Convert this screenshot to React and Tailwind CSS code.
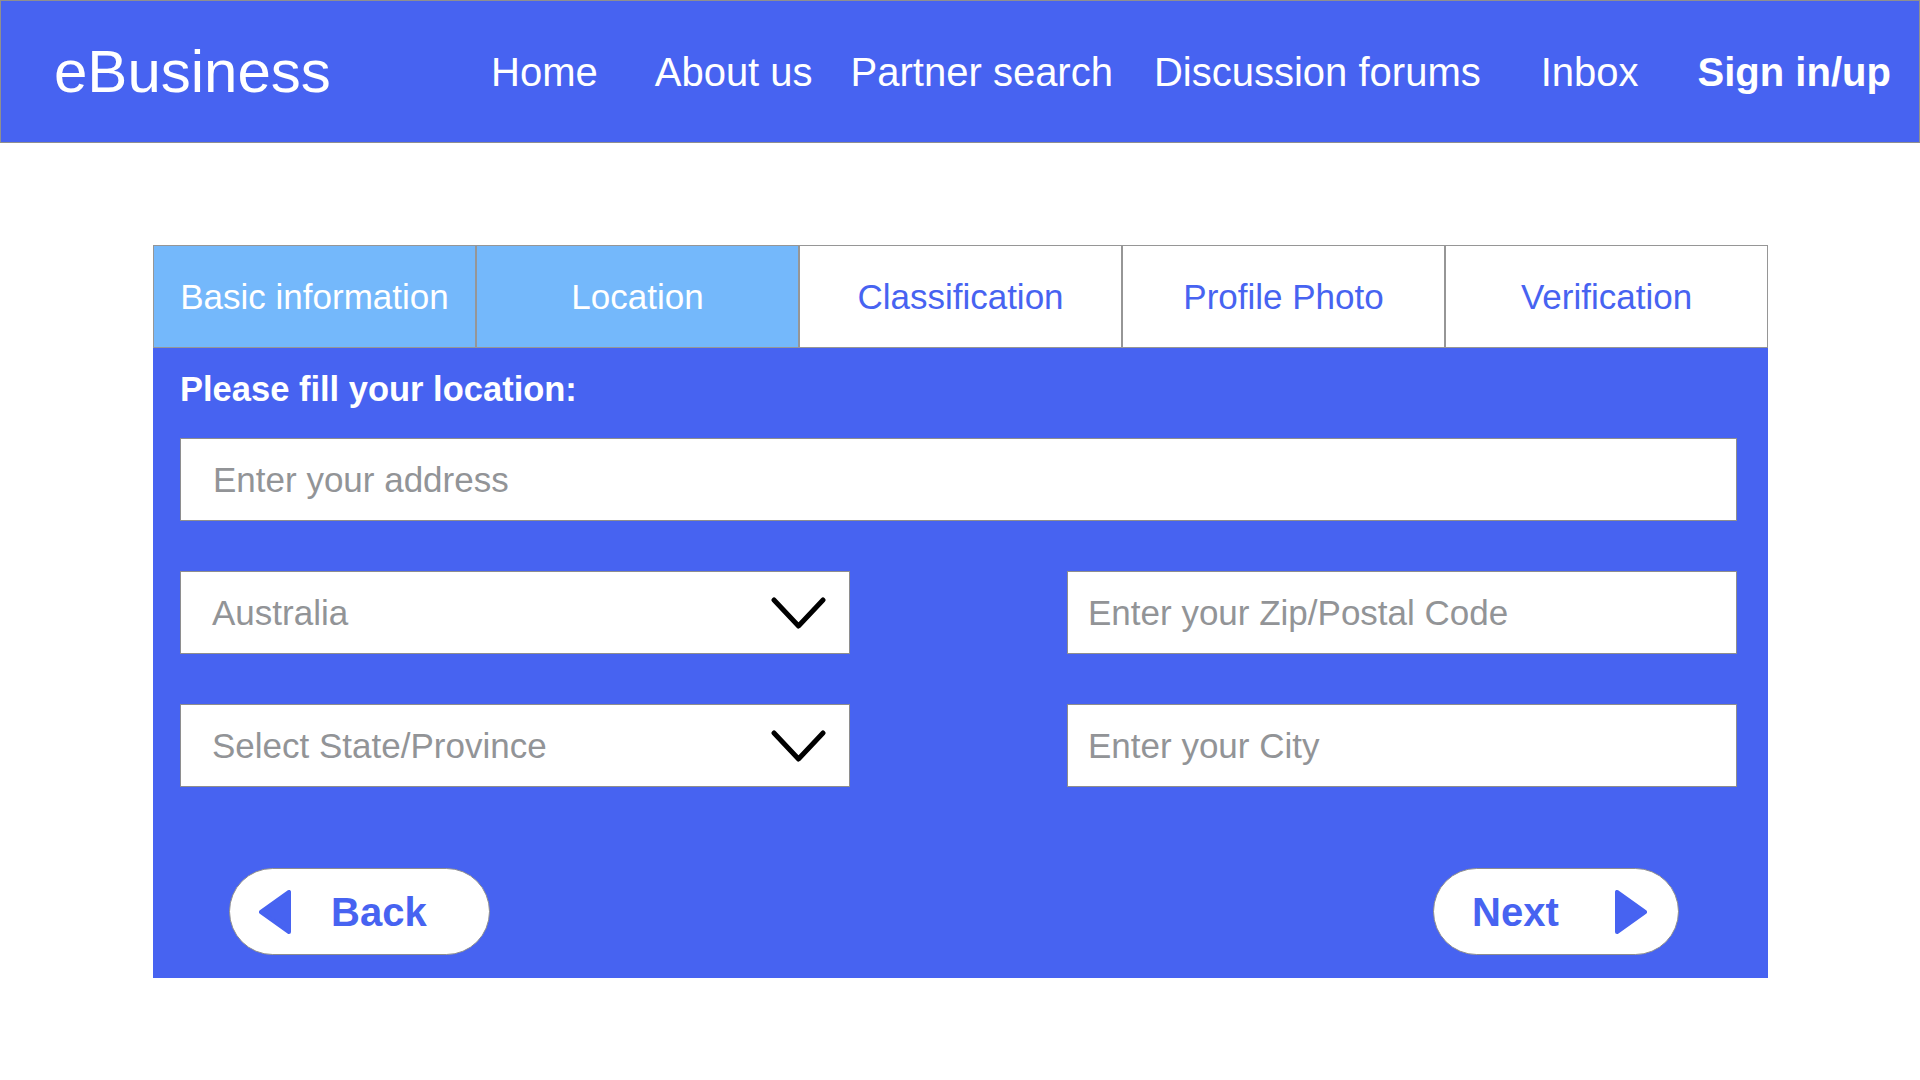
import React from 'react';

const BLUE = 'text-[#4763f1]';

const navItems = [
  { label: 'Home', cls: '' },
  { label: 'About us', cls: 'ml-[57px]' },
  { label: 'Partner search', cls: 'ml-[38px]' },
  { label: 'Discussion forums', cls: 'ml-[41px]' },
  { label: 'Inbox', cls: 'ml-[60px]' },
  { label: 'Sign in/up', cls: 'ml-[59px] font-bold' },
];

const tabs = [
  { label: 'Basic information', active: true },
  { label: 'Location', active: true },
  { label: 'Classification', active: false },
  { label: 'Profile Photo', active: false },
  { label: 'Verification', active: false },
];

const Chevron = () => (
  <svg width="55" height="32" viewBox="0 0 55 32" fill="none">
    <polyline
      points="3,3 27.5,29 52,3"
      stroke="#000"
      strokeWidth="5"
      strokeLinecap="round"
      strokeLinejoin="round"
    />
  </svg>
);

const Triangle = ({ dir }) => (
  <svg width="32" height="44" viewBox="0 0 32 44">
    <polygon
      points={dir === 'left' ? '30,2 30,42 2,22' : '2,2 2,42 30,22'}
      fill="#4763f1"
      stroke="#4763f1"
      strokeWidth="4"
      strokeLinejoin="round"
    />
  </svg>
);

const SelectBox = ({ value }) => (
  <div className="h-[83px] bg-white border border-[#8e8e8e] flex items-center justify-between pl-[31px] pr-[23px] cursor-pointer">
    <span className="text-[35px] leading-none text-[#929497]">{value}</span>
    <Chevron />
  </div>
);

const TextBox = ({ placeholder, pad = 'pl-[20px]' }) => (
  <input
    type="text"
    placeholder={placeholder}
    className={`h-[83px] w-full bg-white border border-[#8e8e8e] ${pad} text-[35px] leading-none text-gray-800 placeholder:text-[#929497] outline-none`}
  />
);

export default function App() {
  return (
    <div className="min-h-screen bg-white font-['Liberation_Sans',Arial,sans-serif]">
      {/* top bar */}
      <header className="h-[143px] bg-[#4763f1] border border-[#8f8f8f] flex items-center text-white">
        <div className="w-[490px] pl-[53px] text-[60px] leading-none">eBusiness</div>
        <nav className="flex items-center">
          {navItems.map((item) => (
            <a key={item.label} href="#" className={`text-[40px] leading-none whitespace-nowrap ${item.cls}`}>
              {item.label}
            </a>
          ))}
        </nav>
      </header>

      {/* wizard */}
      <div className="mt-[102px] ml-[153px] w-[1615px]">
        <div className="grid grid-cols-5">
          {tabs.map((tab) => (
            <div
              key={tab.label}
              className={`h-[103px] border border-[#969696] flex items-center justify-center text-[35px] leading-none ${
                tab.active ? 'bg-[#74b8fb] text-white' : `bg-white ${BLUE}`
              }`}
            >
              {tab.label}
            </div>
          ))}
        </div>

        <div className="h-[630px] bg-[#4763f1] pt-[24px] pl-[27px] pr-[31px]">
          <h2 className="text-[34.5px] font-bold leading-none text-white">Please fill your location:</h2>

          <div className="mt-[31.5px]">
            <TextBox placeholder="Enter your address" pad="pl-[32px]" />
          </div>

          <div className="mt-[50px] grid grid-cols-[670px_670px] justify-between gap-y-[50px]">
            <SelectBox value="Australia" />
            <TextBox placeholder="Enter your Zip/Postal Code" />
            <SelectBox value="Select State/Province" />
            <TextBox placeholder="Enter your City" />
          </div>

          <div className="mt-[81px] flex justify-between pl-[49px] pr-[58px]">
            <button className="w-[261px] h-[87px] rounded-full bg-white border border-[#8e8e8e] flex items-center pl-[29px]">
              <Triangle dir="left" />
              <span className={`ml-[40px] text-[40px] font-bold leading-none ${BLUE}`}>Back</span>
            </button>
            <button className="w-[246px] h-[87px] rounded-full bg-white border border-[#8e8e8e] flex items-center pl-[38px]">
              <span className={`text-[40px] font-bold leading-none ${BLUE}`}>Next</span>
              <span className="ml-[56px] flex">
                <Triangle dir="right" />
              </span>
            </button>
          </div>
        </div>
      </div>
    </div>
  );
}
